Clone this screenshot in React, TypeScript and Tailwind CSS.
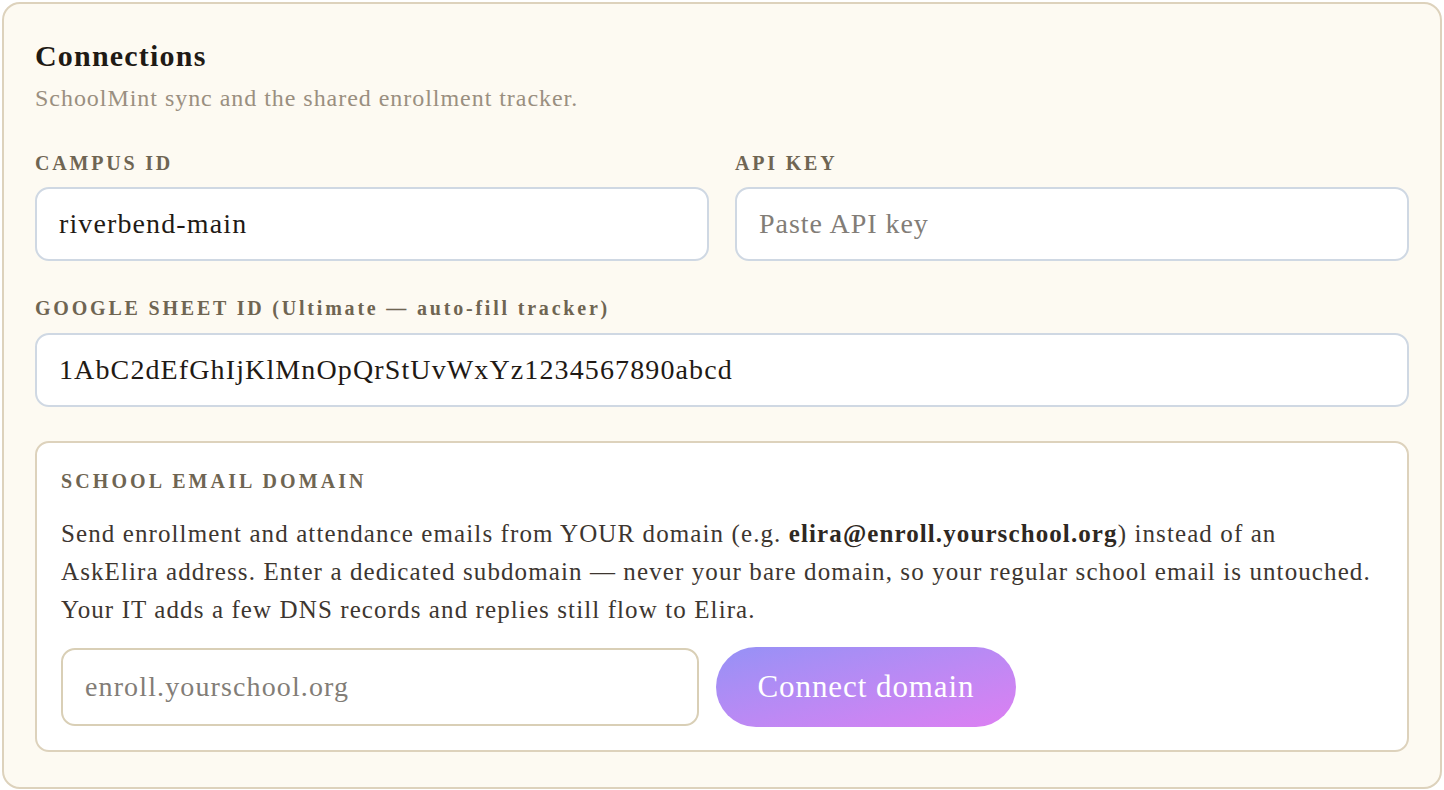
export default function App() {
  const font = { fontFamily: '"Liberation Serif", serif' };
  return (
    <div className="p-[2px] bg-white" style={font}>
      <div className="flex flex-col rounded-[18px] border-2 border-[#ddd2bc] bg-[#fdfaf2] px-[31px] pt-[34px] pb-[35px]">
        <h2 className="text-[30px] leading-[36px] font-bold tracking-[0.04em] text-[#1f1a15]">Connections</h2>
        <p className="mt-[10px] text-[24px] leading-[28px] tracking-[0.04em] text-[#9a8f80]">SchoolMint sync and the shared enrollment tracker.</p>

        <div className="mt-[39px] grid grid-cols-2 gap-x-[26px]">
          <div className="flex flex-col">
            <label className="text-[20px] leading-[24px] font-bold tracking-[0.14em] text-[#6f6552]">CAMPUS ID</label>
            <input
              className="mt-[12px] h-[74px] rounded-[14px] border-2 border-[#cfd8e3] bg-white px-[22px] text-[28px] tracking-[0.04em] text-[#1f1a15] outline-none"
              defaultValue="riverbend-main"
            />
          </div>
          <div className="flex flex-col">
            <label className="text-[20px] leading-[24px] font-bold tracking-[0.14em] text-[#6f6552]">API KEY</label>
            <input
              className="mt-[12px] h-[74px] rounded-[14px] border-2 border-[#cfd8e3] bg-white px-[22px] text-[28px] tracking-[0.035em] text-[#1f1a15] placeholder:text-[#827d77] outline-none"
              placeholder="Paste API key"
            />
          </div>
        </div>

        <label className="mt-[35px] text-[20px] leading-[24px] font-bold tracking-[0.14em] text-[#6f6552]">
          GOOGLE SHEET ID (Ultimate — auto-fill tracker)
        </label>
        <input
          className="mt-[13px] h-[74px] rounded-[14px] border-2 border-[#cfd8e3] bg-white px-[22px] text-[28px] tracking-[0.04em] text-[#1f1a15] outline-none"
          defaultValue="1AbC2dEfGhIjKlMnOpQrStUvWxYz1234567890abcd"
        />

        <div className="mt-[34px] rounded-[14px] border-2 border-[#ddd2bc] bg-white px-[24px] pt-[26px] pb-[23px]">
          <div className="text-[20px] leading-[24px] font-bold tracking-[0.155em] text-[#6f6552]">SCHOOL EMAIL DOMAIN</div>
          <p className="mt-[22px] text-[25px] leading-[38px] tracking-[0.044em] text-[#3d3630] whitespace-nowrap">
            Send enrollment and attendance emails from YOUR domain (e.g. <b className="text-[#2e2822]">elira@enroll.yourschool.org</b>) instead of an
            <br />
            AskElira address. Enter a dedicated subdomain — never your bare domain, so your regular school email is untouched.
            <br />
            Your IT adds a few DNS records and replies still flow to Elira.
          </p>
          <div className="mt-[18px] flex items-center gap-[17px]">
            <input
              className="h-[78px] w-[638px] rounded-[14px] border-2 border-[#d9cfb6] bg-white px-[22px] text-[28px] tracking-[0.04em] text-[#1f1a15] placeholder:text-[#827d77] outline-none"
              placeholder="enroll.yourschool.org"
            />
            <button className="h-[80px] w-[300px] rounded-full bg-gradient-to-br from-[#9591f6] to-[#dc7ff2] text-[31px] tracking-[0.03em] text-white">
              Connect domain
            </button>
          </div>
        </div>
      </div>
    </div>
  );
}
